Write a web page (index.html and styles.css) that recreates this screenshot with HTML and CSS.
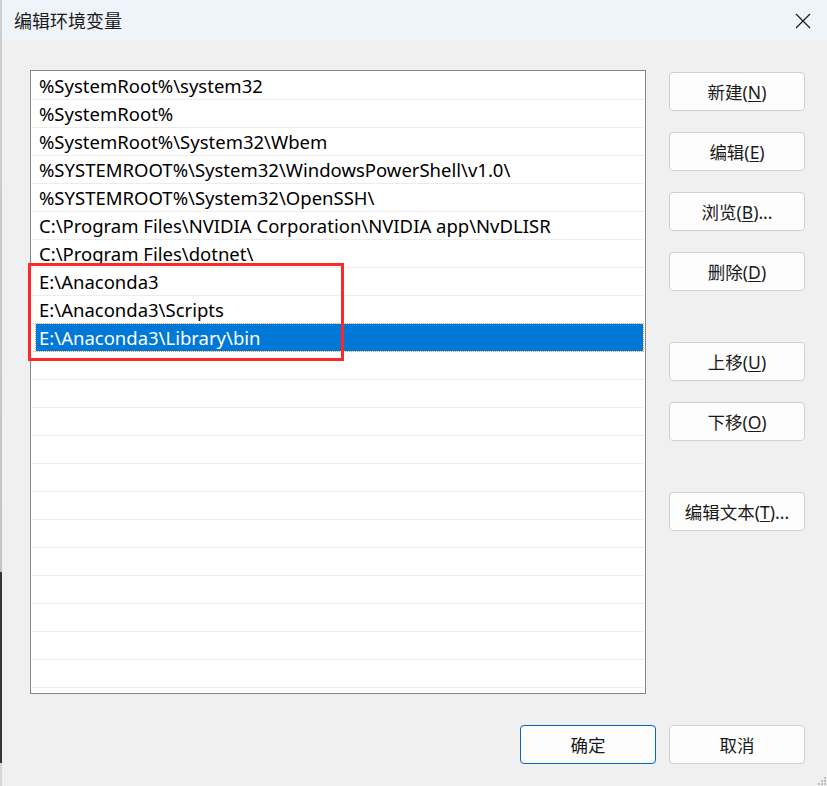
FILE: index.html
```html
<!DOCTYPE html>
<html lang="zh-CN">
<head>
    <meta charset="UTF-8">
    <title>编辑环境变量</title>
    <link rel="stylesheet" href="styles.css">
</head>
<body>
<div class="edge"></div>
<div class="window">
    <div class="titlebar">
        <span class="title">编辑环境变量</span>
        <span class="close">
            <svg width="16" height="16" viewBox="0 0 16 16"><path d="M1 1L15 15M15 1L1 15" stroke="#1a1a1a" stroke-width="1.2" fill="none"/></svg>
        </span>
    </div>

    <div class="content">
        <div class="list">
            <div class="row">%SystemRoot%\system32</div>
            <div class="row">%SystemRoot%</div>
            <div class="row">%SystemRoot%\System32\Wbem</div>
            <div class="row">%SYSTEMROOT%\System32\WindowsPowerShell\v1.0\</div>
            <div class="row">%SYSTEMROOT%\System32\OpenSSH\</div>
            <div class="row">C:\Program Files\NVIDIA Corporation\NVIDIA app\NvDLISR</div>
            <div class="row">C:\Program Files\dotnet\</div>
            <div class="row">E:\Anaconda3</div>
            <div class="row">E:\Anaconda3\Scripts</div>
            <div class="row selected"><span>E:\Anaconda3\Library\bin</span></div>
            <div class="row"></div>
            <div class="row"></div>
            <div class="row"></div>
            <div class="row"></div>
            <div class="row"></div>
            <div class="row"></div>
            <div class="row"></div>
            <div class="row"></div>
            <div class="row"></div>
            <div class="row"></div>
            <div class="row"></div>
            <div class="row"></div>
            <div class="mark"></div>
        </div>

        <div class="side">
            <div class="group">
                <button class="btn">新建(<u>N</u>)</button>
                <button class="btn">编辑(<u>E</u>)</button>
                <button class="btn">浏览(<u>B</u>)...</button>
                <button class="btn">删除(<u>D</u>)</button>
            </div>
            <div class="group">
                <button class="btn">上移(<u>U</u>)</button>
                <button class="btn">下移(<u>O</u>)</button>
            </div>
            <div class="group">
                <button class="btn">编辑文本(<u>T</u>)...</button>
            </div>
        </div>
    </div>

    <div class="footer">
        <button class="btn default">确定</button>
        <button class="btn">取消</button>
    </div>

    <svg class="grip" width="10" height="10" viewBox="0 0 10 10" fill="#bdbdbd">
        <rect x="7" y="1" width="2" height="2"/>
        <rect x="4" y="4" width="2" height="2"/><rect x="7" y="4" width="2" height="2"/>
        <rect x="1" y="7" width="2" height="2"/><rect x="4" y="7" width="2" height="2"/><rect x="7" y="7" width="2" height="2"/>
    </svg>
</div>
</body>
</html>
```

FILE: styles.css
```css
* {
    margin: 0;
    padding: 0;
    box-sizing: border-box;
}
body {
    display: flex;
    width: 827px;
    height: 786px;
    overflow: hidden;
    background: #f0f0f0;
    font-family: "Noto Sans", "Noto Sans CJK SC", sans-serif;
    color: #000;
}
.edge {
    width: 2px;
    flex: none;
    background: linear-gradient(to bottom, #cfcfcf 0, #c4c4c4 572px, #353535 572px, #353535 763px, #d6d6d6 763px);
}
.window {
    position: relative;
    flex: 1;
    display: flex;
    flex-direction: column;
    background: #f0f0f0;
}
.titlebar {
    height: 40px;
    background: #eef4f9;
    display: flex;
    align-items: center;
    justify-content: space-between;
    padding: 0 16px 0 12px;
}
.title {
    font-size: 18px;
    color: #1a1a1a;
}
.close {
    display: flex;
    padding-top: 1px;
}

.content {
    display: flex;
    padding: 30px 0 0 28px;
    gap: 23px;
}
.list {
    position: relative;
    width: 616px;
    height: 624px;
    border: 1px solid #828790;
    background: #fff;
    padding-top: 1px;
}
.row {
    height: 28px;
    margin: 0 1px;
    border-bottom: 1px solid #ececec;
    padding-left: 7px;
    font-size: 18.5px;
    line-height: 27px;
    white-space: nowrap;
}
.row.selected {
    padding-left: 4px;
    margin-right: 2px;
}
.row.selected span {
    display: block;
    height: 27px;
    background: #0078d7;
    color: #fff;
    padding-left: 3px;
    outline: 1px dotted #e8a060;
}
.mark {
    position: absolute;
    left: -3px;
    top: 192px;
    width: 316px;
    height: 98px;
    border: 3px solid #fa2a2a;
}

.side {
    display: flex;
    flex-direction: column;
    padding-top: 2px;
    gap: 51px;
}
.group {
    display: flex;
    flex-direction: column;
    gap: 21px;
}
.btn {
    width: 136px;
    height: 39px;
    border: 1px solid #d0d0d0;
    border-radius: 4px;
    background: #fdfdfd;
    font-family: "Noto Sans", "Noto Sans CJK SC", sans-serif;
    font-size: 17.5px;
    color: #1a1a1a;
}
.btn u {
    text-underline-offset: 2px;
}
.btn.default {
    border-color: #0067c0;
}

.footer {
    display: flex;
    justify-content: flex-end;
    gap: 13px;
    padding: 31px 22px 0 0;
}
.grip {
    position: absolute;
    right: 0;
    bottom: 0;
}
```
